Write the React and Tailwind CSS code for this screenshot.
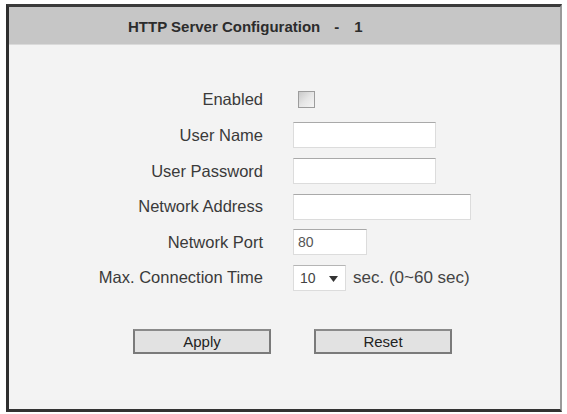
import React, { useState } from 'react';

const font = { fontFamily: '"Liberation Sans", Arial, sans-serif' };

const inputClass =
  'h-[26px] bg-white border border-[#dcdcdc] border-t-[#a9a9a9] px-[4px] text-[14px] text-[#555] outline-none';

function Row({ label, children }) {
  return (
    <>
      <div className="flex items-center justify-end text-[16.5px] text-[#3a3a3a]">{label}</div>
      <div className="flex items-center">{children}</div>
    </>
  );
}

export default function App() {
  const [enabled, setEnabled] = useState(false);
  const [userName, setUserName] = useState('');
  const [password, setPassword] = useState('');
  const [address, setAddress] = useState('');
  const [port, setPort] = useState('80');
  const [time, setTime] = useState('10');

  return (
    <div className="w-[567px] h-[414px] bg-white pt-[4px] pl-[6px]" style={font}>
      <div className="w-[556px] h-[408px] bg-[#f3f3f3] border-l-[3px] border-t-[3px] border-b-[3px] border-r-[2px] border-l-[#2e2e2e] border-t-[#3a3a3a] border-b-[#333] border-r-[#9a9a9a] flex flex-col">
        {/* header */}
        <div className="h-[38px] bg-[#c6c6c6] border-b border-[#dadada] flex items-center pt-[4px] pl-[119px] text-[15px] font-bold text-[#2c2c2c]">
          <span>HTTP Server Configuration</span>
          <span className="ml-[14px]">-</span>
          <span className="ml-[15px]">1</span>
        </div>

        {/* form */}
        <div className="grid grid-cols-[254px_1fr] gap-x-[30px] auto-rows-[35.6px] mt-[37px]">
          <Row label="Enabled">
            <button
              onClick={() => setEnabled(!enabled)}
              className="ml-[5px] w-[17px] h-[17px] border border-[#9c9c9c] bg-gradient-to-br from-[#c9c9c9] via-[#e6e6e6] to-[#f4f4f4] flex items-center justify-center text-[12px] leading-none text-[#333]"
            >
              {enabled ? '✓' : ''}
            </button>
          </Row>
          <Row label="User Name">
            <input className={`${inputClass} w-[143px]`} value={userName} onChange={(e) => setUserName(e.target.value)} />
          </Row>
          <Row label="User Password">
            <input type="password" className={`${inputClass} w-[143px]`} value={password} onChange={(e) => setPassword(e.target.value)} />
          </Row>
          <Row label="Network Address">
            <input className={`${inputClass} w-[178px]`} value={address} onChange={(e) => setAddress(e.target.value)} />
          </Row>
          <Row label="Network Port">
            <input className={`${inputClass} w-[74px]`} value={port} onChange={(e) => setPort(e.target.value)} />
          </Row>
          <Row label="Max. Connection Time">
            <div className="relative w-[53px] h-[26px] bg-white border border-[#dcdcdc] border-t-[#b5b5b5]">
              <select
                value={time}
                onChange={(e) => setTime(e.target.value)}
                className="appearance-none w-full h-full bg-transparent pl-[6px] text-[14px] text-[#444] outline-none"
              >
                {Array.from({ length: 7 }, (_, i) => String(i * 10)).map((v) => (
                  <option key={v} value={v}>{v}</option>
                ))}
              </select>
              <svg className="absolute right-[7px] top-[10px] pointer-events-none" width="9" height="6" viewBox="0 0 9 6">
                <path d="M0 0 L9 0 L4.5 6 Z" fill="#333" />
              </svg>
            </div>
            <span className="ml-[7px] text-[17px] text-[#444]">sec. (0~60 sec)</span>
          </Row>
        </div>

        {/* buttons */}
        <div className="flex mt-[33px] pl-[124px] gap-[43px]">
          <button className="w-[138px] h-[25px] bg-[#e2e2e2] border-2 border-[#7a7a7a] border-t-[#8a8a8a] text-[15px] text-[#222] leading-none">
            Apply
          </button>
          <button className="w-[138px] h-[25px] bg-[#e2e2e2] border-2 border-[#7a7a7a] border-t-[#8a8a8a] text-[15px] text-[#222] leading-none">
            Reset
          </button>
        </div>
      </div>
    </div>
  );
}
